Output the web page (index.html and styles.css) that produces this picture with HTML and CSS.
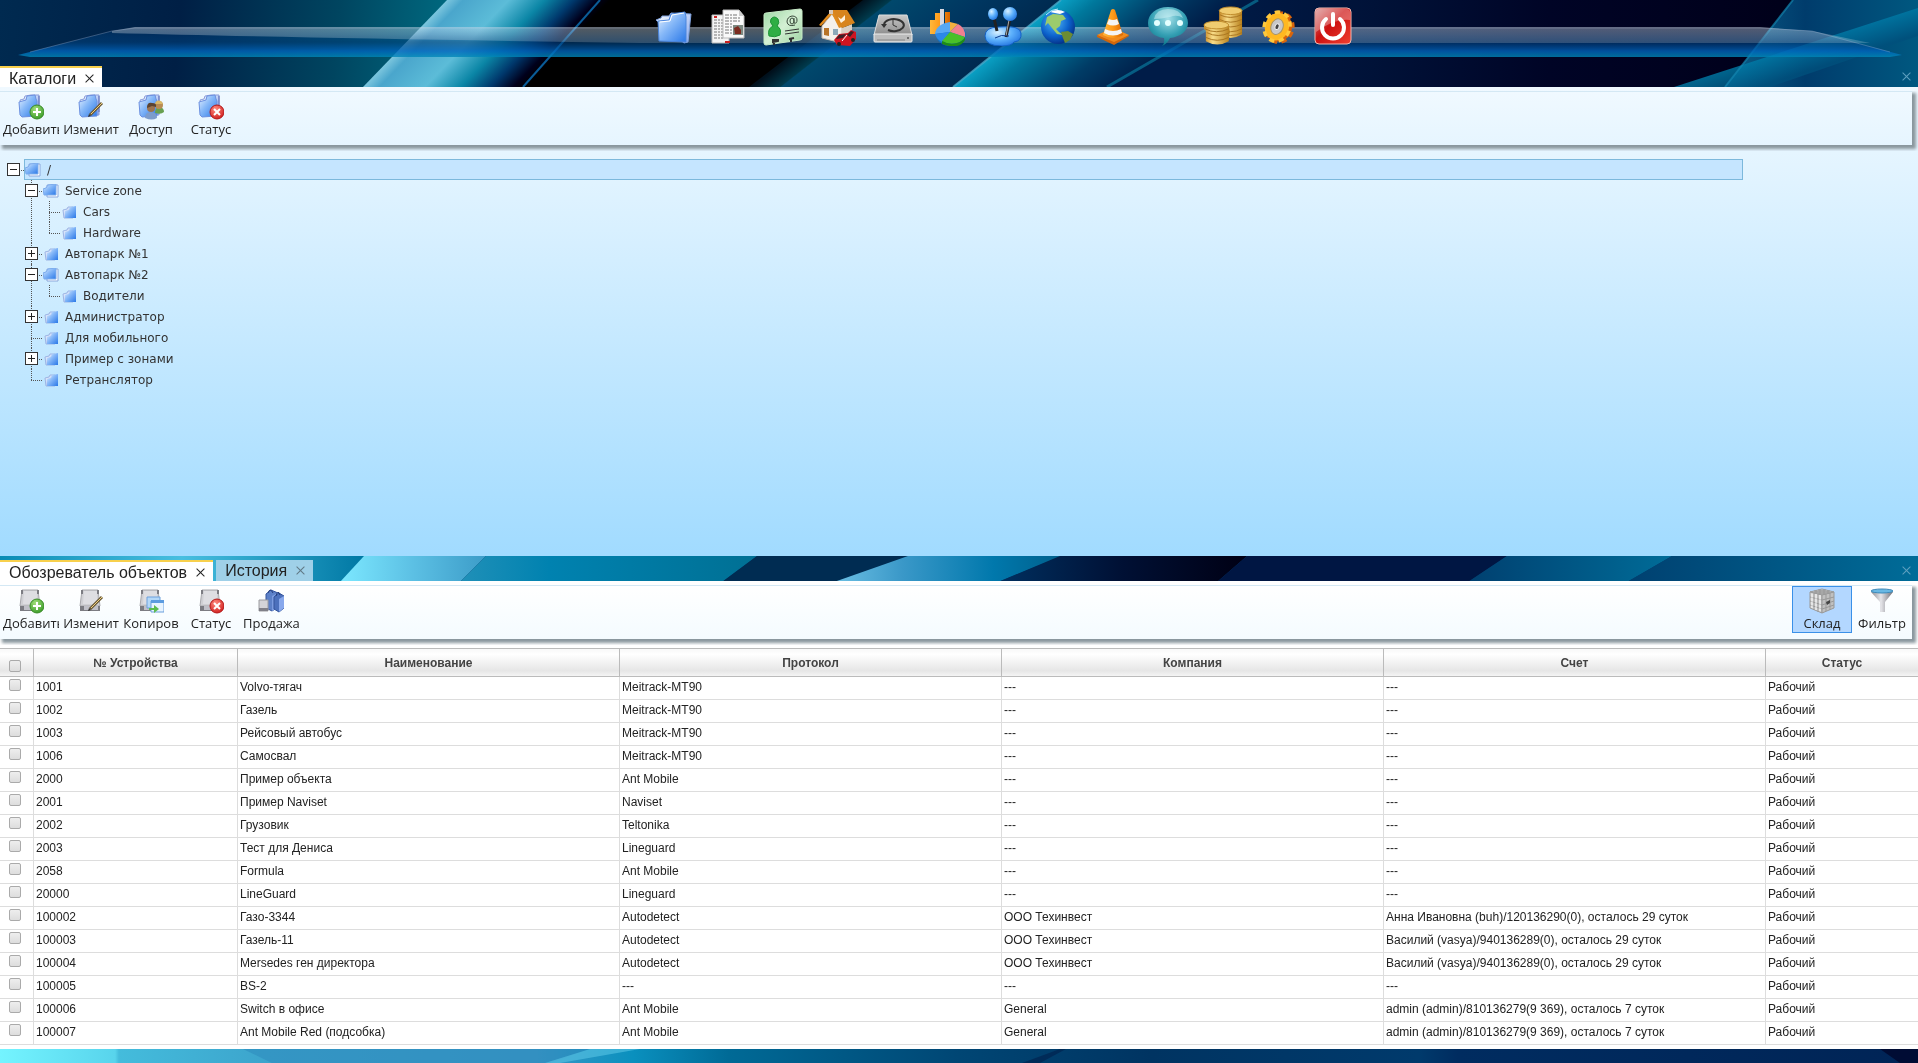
FILE: index.html
```html
<!DOCTYPE html>
<html lang="ru">
    <head>
        <meta charset="UTF-8">
        <title>Каталоги</title>
        <link rel="stylesheet" href="styles.css">
    </head>
    <body>
        <!-- фон рабочего стола -->
        <svg class="wallpaper" viewBox="0 0 1918 1063" preserveAspectRatio="none" aria-hidden="true">
            <defs>
                <linearGradient id="w1" gradientUnits="userSpaceOnUse" x1="0" y1="0" x2="450" y2="40">
                    <stop offset="0" stop-color="#002a50"/><stop offset=".4" stop-color="#001f45"/><stop offset=".75" stop-color="#004560"/><stop offset="1" stop-color="#006a80"/>
                </linearGradient>
                <linearGradient id="w2" gradientUnits="userSpaceOnUse" x1="447" y1="0" x2="610" y2="0" gradientTransform="skewX(-44)">
                    <stop offset="0" stop-color="#7cc6de"/><stop offset=".1" stop-color="#4aa6cc"/><stop offset=".38" stop-color="#5cbcd8"/><stop offset=".6" stop-color="#0b86a6"/><stop offset=".78" stop-color="#00386c"/><stop offset=".92" stop-color="#00001c"/><stop offset="1" stop-color="#000"/>
                </linearGradient>
                <linearGradient id="w3" gradientUnits="userSpaceOnUse" x1="863" y1="0" x2="1061" y2="0" gradientTransform="skewX(-52)">
                    <stop offset="0" stop-color="#00101c"/><stop offset=".14" stop-color="#003a4c"/><stop offset=".15" stop-color="#00486c"/><stop offset=".6" stop-color="#003660"/><stop offset="1" stop-color="#002a50"/>
                </linearGradient>
                <linearGradient id="w4" gradientUnits="userSpaceOnUse" x1="1061" y1="0" x2="1240" y2="0" gradientTransform="skewX(-51)">
                    <stop offset="0" stop-color="#0aa0c4"/><stop offset=".2" stop-color="#00789c"/><stop offset=".6" stop-color="#003c66"/><stop offset="1" stop-color="#001a45"/>
                </linearGradient>
                <linearGradient id="w5" gradientUnits="userSpaceOnUse" x1="1200" y1="0" x2="1780" y2="0">
                    <stop offset="0" stop-color="#001c48"/><stop offset=".3" stop-color="#001238"/><stop offset=".6" stop-color="#000426"/><stop offset="1" stop-color="#00001a"/>
                </linearGradient>
                <linearGradient id="w6" gradientUnits="userSpaceOnUse" x1="1730" y1="0" x2="1918" y2="0">
                    <stop offset="0" stop-color="#0a5c86"/><stop offset=".4" stop-color="#003c6c"/><stop offset="1" stop-color="#005880"/>
                </linearGradient>
                <linearGradient id="w7" gradientUnits="userSpaceOnUse" x1="1780" y1="40" x2="1792" y2="76">
                    <stop offset="0" stop-color="#0090bc"/><stop offset="1" stop-color="#00507c"/>
                </linearGradient>
                <linearGradient id="m1" x1="0" x2="1"><stop offset="0" stop-color="#0a8cb4"/><stop offset=".5" stop-color="#48bfe0"/><stop offset="1" stop-color="#0078a4"/></linearGradient>
                <linearGradient id="m2" x1="0" x2="1"><stop offset="0" stop-color="#7ce8ff"/><stop offset=".5" stop-color="#5cc0e4"/><stop offset="1" stop-color="#3c9cc8"/></linearGradient>
                <linearGradient id="m3" x1="0" x2="1"><stop offset="0" stop-color="#2090b8"/><stop offset=".3" stop-color="#0082b0"/><stop offset="1" stop-color="#007094"/></linearGradient>
                <linearGradient id="m4" x1="0" x2="1"><stop offset="0" stop-color="#6cc0e4"/><stop offset=".3" stop-color="#3a98c8"/><stop offset=".7" stop-color="#0078ac"/><stop offset="1" stop-color="#00608c"/></linearGradient>
                <linearGradient id="m5" x1="0" x2="1"><stop offset="0" stop-color="#003060"/><stop offset=".5" stop-color="#001034"/><stop offset="1" stop-color="#000014"/></linearGradient>
                <linearGradient id="m6" x1="0" x2="1"><stop offset="0" stop-color="#004070"/><stop offset="1" stop-color="#006c98"/></linearGradient>
                <linearGradient id="b1" gradientUnits="userSpaceOnUse" x1="0" y1="0" x2="1918" y2="0">
                    <stop offset="0" stop-color="#74f4ff"/><stop offset=".06" stop-color="#58d4ec"/><stop offset=".062" stop-color="#44bcdc"/><stop offset=".14" stop-color="#3ca4cc"/><stop offset=".28" stop-color="#3a98c6"/><stop offset=".33" stop-color="#0a90be"/><stop offset=".38" stop-color="#006a96"/><stop offset=".5" stop-color="#004674"/><stop offset=".6" stop-color="#003462"/><stop offset=".74" stop-color="#003a6c"/><stop offset=".76" stop-color="#002c60"/><stop offset="1" stop-color="#002456"/>
                </linearGradient>
            </defs>
            <rect width="1918" height="1063" fill="#003a6c"/>
            <!-- верхняя полоса -->
            <rect width="450" height="87" fill="url(#w1)"/>
            <path d="M447 0H880V87H363Z" fill="url(#w2)"/>
            <path d="M600 0L523 87" stroke="#0a5c98" stroke-width="2"/>
            <path d="M863 0H1070V87H749Z" fill="url(#w3)"/>
            <path d="M1061 0H1270L1120 87H953Z" fill="url(#w4)"/>
            <path d="M1061 0L953 87" stroke="#48a8c8" stroke-width="2" opacity=".8"/>
            <path d="M1258 0H1800L1730 87H1107Z" fill="url(#w5)"/>
            <path d="M1258 0L1107 87" stroke="#0a86a8" stroke-width="3" opacity=".6"/>
            <path d="M1793 0H1918V87H1725Z" fill="url(#w6)"/>
            <path d="M1918 8L1674 87H1770L1918 36Z" fill="url(#w7)" opacity=".8"/>
            <path d="M1793 0L1725 87" stroke="#1486b0" stroke-width="2" opacity=".7"/>
            <!-- средняя полоса -->
            <rect y="556" width="364" height="26" fill="url(#m1)"/>
            <path d="M364 556H486L460 582H340Z" fill="url(#m2)"/>
            <path d="M486 556H757L722 582H460Z" fill="url(#m3)"/>
            <path d="M757 556H910L835 582H722Z" fill="#002c52"/>
            <path d="M908 556H1062L998 582H834Z" fill="url(#m4)"/>
            <path d="M1060 556H1247L1217 582H998Z" fill="url(#m5)"/>
            <path d="M1247 556H1507L1468 582H1217Z" fill="#001643"/>
            <path d="M1507 556H1672L1627 582H1468Z" fill="url(#m6)"/>
            <path d="M1672 556H1918V582H1627Z" fill="url(#m6)"/>
            <!-- нижняя полоса -->
            <rect y="1049" width="1918" height="14" fill="url(#b1)"/>
            <path d="M243 1049L272 1063H550L590 1049Z" fill="#2c88bc" opacity=".5"/>
            <path d="M590 1049H640L560 1063H545Z" fill="#58c4e4" opacity=".6"/>
            <path d="M1060 1049L1022 1063H1040L1066 1049Z" fill="#002450" opacity=".7"/>
            <path d="M1880 1049H1918V1063H1900Z" fill="#000c34"/>
        </svg>

        <!-- набор иконок -->
        <svg class="sprite" aria-hidden="true">
            <defs>
                <linearGradient id="blue" x1="0" y1="0" x2="1" y2="1"><stop offset="0" stop-color="#e8f3ff"/><stop offset=".45" stop-color="#86b8f8"/><stop offset="1" stop-color="#2a78e8"/></linearGradient>
                <linearGradient id="pale" x1="0" y1="0" x2="1" y2="1"><stop offset="0" stop-color="#f6faff"/><stop offset="1" stop-color="#8cabee"/></linearGradient>
                <linearGradient id="metal" x1="0" y1="0" x2="0" y2="1"><stop offset="0" stop-color="#c8c8c8"/><stop offset="1" stop-color="#8c8c8c"/></linearGradient>
                <linearGradient id="silver" x1="0" y1="0" x2="1" y2="0"><stop offset="0" stop-color="#8c8c92"/><stop offset=".45" stop-color="#e6e6ea"/><stop offset="1" stop-color="#707078"/></linearGradient>
                <linearGradient id="gold" x1="0" y1="0" x2="1" y2="0"><stop offset="0" stop-color="#c88a26"/><stop offset=".35" stop-color="#f8dc88"/><stop offset="1" stop-color="#b8801c"/></linearGradient>
                <linearGradient id="orange" x1="0" y1="0" x2="1" y2="0"><stop offset="0" stop-color="#ffb83c"/><stop offset=".5" stop-color="#ff9a18"/><stop offset="1" stop-color="#d86400"/></linearGradient>
                <linearGradient id="card" x1="0" y1="0" x2="1" y2="1"><stop offset="0" stop-color="#9cd8a4"/><stop offset=".5" stop-color="#d4f0d4"/><stop offset="1" stop-color="#9cd4a0"/></linearGradient>
                <linearGradient id="red" x1="0" y1="0" x2="1" y2="1"><stop offset="0" stop-color="#d89090"/><stop offset=".45" stop-color="#cc1010"/><stop offset="1" stop-color="#f04030"/></linearGradient>
                <radialGradient id="ball" cx=".35" cy=".3" r=".8"><stop offset="0" stop-color="#d8f0ff"/><stop offset=".5" stop-color="#5cb0fc"/><stop offset="1" stop-color="#1c6cdc"/></radialGradient>
                <radialGradient id="sea" cx=".4" cy=".35" r=".7"><stop offset="0" stop-color="#50b8f8"/><stop offset=".6" stop-color="#0c62cc"/><stop offset="1" stop-color="#042c80"/></radialGradient>
                <radialGradient id="teal" cx=".5" cy=".3" r=".7"><stop offset="0" stop-color="#a4e0e8"/><stop offset=".6" stop-color="#35a0b4"/><stop offset="1" stop-color="#0c7488"/></radialGradient>
                <radialGradient id="greenball" cx=".4" cy=".3" r=".8"><stop offset="0" stop-color="#a4e07c"/><stop offset="1" stop-color="#2f9420"/></radialGradient>
                <radialGradient id="redball" cx=".4" cy=".3" r=".8"><stop offset="0" stop-color="#ff8c80"/><stop offset="1" stop-color="#cc1414"/></radialGradient>
            </defs>
            <symbol id="i-folder" viewBox="0 0 40 40">
                <path d="M3 14l5-2 1-2h7l2-3 20 1-3 28-4 1z" fill="url(#pale)" stroke="#7ea0dc"/>
                <path d="M5 15l11-1 2-6 14-2 1 5v25l-27-1z" fill="url(#blue)" stroke="#4c86dc"/>
                <path d="M7 16l10-1 2-6 12-2" fill="none" stroke="#fff"/>
            </symbol>
            <symbol id="i-docs" viewBox="0 0 40 40">
                <path d="M4 9h17v28H4z" fill="#f4f4f4" stroke="#bbb"/>
                <path d="M6 14h11M6 17h11M6 20h11M6 23h11M6 26h11M6 29h11M6 32h9" stroke="#777" stroke-dasharray="3 1 2 1"/>
                <path d="M6 11h3M17 36h5" stroke="#c22" stroke-width="2"/>
                <path d="M15 4h16l5 6v22H15z" fill="#fafafa" stroke="#bbb"/>
                <path d="M31 4v6h5z" fill="#ccc"/>
                <path d="M17 9h12M17 12h16M17 15h16M17 18h8M17 21h8M17 24h8M17 27h8" stroke="#777" stroke-dasharray="4 1 2 1"/>
                <path d="M25 19h10v10H25z" fill="#7d8a82"/><path d="M26 22l4-2 3 4v4h-6z" fill="#7c2c20"/>
            </symbol>
            <symbol id="i-card" viewBox="0 0 40 40">
                <path d="M1 9q0-2 2-2l34-4q2 0 2 2v27q0 2-2 2L3 39q-2 0-2-2z" fill="url(#card)" stroke="#c8ecc8"/>
                <path d="M6 30Q4 23 10 20 6 16 8 13q3-4 7 0 2 4-1 7 5 3 3 9-5 3-11 1z" fill="#2fae44" stroke="#1c9436"/>
                <path d="M22 25l14-2M22 28l14-2" stroke="#333"/>
                <ellipse cx="29" cy="15" rx="2" ry="3" fill="none" stroke="#3a4a3c"/>
                <path d="M31 12v5q3 1 3-3 0-4-5-4-5 1-5 6 1 5 8 3" fill="none" stroke="#3a4a3c"/>
                <path d="M10 36l5-1v-1h-5zM11 35v4M26 33l5-1M28 32v4" stroke="#333" stroke-width="2"/>
            </symbol>
            <symbol id="i-house" viewBox="0 0 40 40">
                <path d="M4 20L14 8l10 14v15L4 32z" fill="#f4f0ea" stroke="#c8beb0"/>
                <path d="M24 22l10-4v12l-10 7z" fill="#d8cfc4"/>
                <path d="M6 22h5v8l-5-1z" fill="#b87428"/><path d="M15 23h5v6h-5z" fill="#8ca8b8"/>
                <path d="M1 19L14 4l3 0 7 17-3 1-7-14L3 20z" fill="#e08a1c"/>
                <path d="M14 4l15 0 8 13-13 5z" fill="#d8841c"/><path d="M20 11l3 2 4-4v5l-4 3z" fill="#fff0d8"/><path d="M11 4h4v4h-4z" fill="#d8c8b8"/>
                <path d="M16 34l5-6 9-1 3-3 5 2v7l-6 7-13-1z" fill="#d01420"/>
                <path d="M21 29l7-1-3 4-7 1zM29 29l4-4 3 1-4 5z" fill="#3b2028"/>
                <circle cx="21" cy="38" r="2" fill="#222"/><circle cx="35" cy="34" r="2" fill="#222"/><path d="M24 35l5-6" stroke="#fff"/>
            </symbol>
            <symbol id="i-backup" viewBox="0 0 40 40">
                <path d="M6 9h28l5 20H1z" fill="url(#metal)" stroke="#ddd"/>
                <path d="M1 28h38v7q0 1-1 1H2q-1 0-1-1z" fill="#bcbcbc" stroke="#eee"/>
                <path d="M4 34h28" stroke="#888"/><circle cx="35" cy="32" r="1" fill="#555"/>
                <path d="M11 18a10 6 0 1 1 4 6" fill="none" stroke="#333" stroke-width="2"/>
                <path d="M8 18h6l-3 4z" fill="#333"/><path d="M20 13v6l4 2" fill="none" stroke="#333"/>
            </symbol>
            <symbol id="i-chart" viewBox="0 0 40 40">
                <path d="M2 14h5v14H2zM7 7h5v20H7zM17 6h5v18h-5z" fill="url(#orange)"/><path d="M12 3h4v22h-4z" fill="#d8d8e0"/>
                <ellipse cx="23" cy="29" rx="15" ry="11" fill="#1470c0"/>
                <path d="M22 26V16Q8 18 7 28z" fill="#58a8f4"/>
                <path d="M22 26L7 28q2 6 7 8z" fill="#2c88e8"/><path d="M22 26V16l8 2z" fill="#f0b040"/>
                <path d="M22 26l8-8q8 4 7 13z" fill="#f08090"/>
                <path d="M22 26l15 5q-3 5-8 6-9 2-15-2z" fill="#48c028"/><path d="M14 35q7 4 15 2 6-2 8-6v3q-3 5-8 6-8 1-15-2z" fill="#1f8c14"/>
            </symbol>
            <symbol id="i-joystick" viewBox="0 0 40 40">
                <path d="M2 30q0-9 14-9 21-2 22 6 1 8-7 9-3 4-12 4-17 0-17-10z" fill="url(#ball)" stroke="#1460c4"/>
                <path d="M11 12l3 13M27 13l-4 18" stroke="#222" stroke-width="3"/><path d="M26 14l-3 16" stroke="#aaa"/>
                <path d="M12 32q6-4 14-2" fill="none" stroke="#0c3c90"/>
                <ellipse cx="10" cy="8" rx="5" ry="6" fill="url(#ball)"/><circle cx="27" cy="8" r="7" fill="url(#ball)"/>
            </symbol>
            <symbol id="i-globe" viewBox="0 0 40 40">
                <circle cx="20" cy="21" r="17" fill="url(#sea)"/>
                <path d="M12 6q8-4 15 0l-5 2-5-1z" fill="#fff"/>
                <path d="M9 11l6-3 10 1 3 4-5 2-1 5-4 3 3 3 4 3-6-1-5-6-4-5-3 3z" fill="#9ccc6c"/>
                <path d="M23 26l7-1 5 3-3 6-5 3-2-5z" fill="#6c8c34"/><path d="M8 9q5-6 12-6" stroke="#bcecff" fill="none"/>
            </symbol>
            <symbol id="i-cone" viewBox="0 0 40 40">
                <path d="M4 29l9-4h14l9 4-15 9z" fill="#f08a1c"/><path d="M4 29l17 7 15-7v1l-15 9-17-8z" fill="#d0660c"/>
                <path d="M18 4q2-2 4 0l8 25q-9 6-20 0z" fill="url(#orange)"/>
                <path d="M16 13q4 2 8 0l2 5q-6 3-12 0zM12 23q8 4 16 0l1 4q-9 5-18 0z" fill="#f4f4f4"/>
            </symbol>
            <symbol id="i-chat" viewBox="0 0 40 40">
                <path d="M20 1c12 0 20 7 20 16 0 8-8 14-18 15q-3 6-8 8 3-3 2-8C6 31 0 25 0 17 0 8 8 1 20 1z" fill="url(#teal)"/>
                <path d="M6 13Q8 3 20 3q12 0 15 9-6-4-13-1-9 2-16 2z" fill="#d4f4f8" opacity=".5"/>
                <circle cx="9" cy="17" r="3" fill="#e4ffff"/><circle cx="20" cy="17" r="3" fill="#e4ffff"/><circle cx="32" cy="17" r="3" fill="#e4ffff"/>
            </symbol>
            <symbol id="i-coins" viewBox="0 0 40 42">
                <path d="M16 5q12-7 24 0v25q-12 7-24 0z" fill="url(#gold)"/><ellipse cx="28" cy="5" rx="12" ry="4" fill="#f0cc70" stroke="#c08c2c"/>
                <path d="M16 9q12 6 24 0M16 14q12 6 24 0M16 19q12 6 24 0M16 24q12 6 24 0M16 28q12 6 24 0" fill="none" stroke="#a87420"/>
                <path d="M0 20q13-8 26 0l1 6-1 11q-12 7-24 0V26l-2-2z" fill="url(#gold)"/><ellipse cx="13" cy="20" rx="13" ry="4" fill="#f0cc70" stroke="#c08c2c"/>
                <path d="M1 24q12 6 25 0M3 28q12 6 24 0M2 33q12 6 24 0" fill="none" stroke="#a87420"/>
            </symbol>
            <symbol id="i-gear" viewBox="0 0 40 40">
                <g transform="rotate(20 20 21)">
                    <ellipse cx="22" cy="21" rx="12" ry="14" fill="#d8640c" stroke="#d8640c" stroke-width="5" stroke-dasharray="5 4"/>
                    <ellipse cx="19" cy="21" rx="12" ry="14" fill="#ffb820" stroke="#ffc83c" stroke-width="5" stroke-dasharray="5 4"/>
                    <ellipse cx="19" cy="21" rx="11" ry="13" fill="#ffb820"/>
                    <ellipse cx="19" cy="21" rx="6" ry="8" fill="#c8c8c8" stroke="#a89468"/>
                    <ellipse cx="19" cy="21" rx="2" ry="3" fill="#444" stroke="#eee"/>
                </g>
            </symbol>
            <symbol id="i-power" viewBox="0 0 40 40">
                <rect x="2" y="2" width="36" height="36" rx="4" fill="url(#red)" stroke="#f0b8b0"/>
                <path d="M3 5q1-2 3-2h28q3 0 3 3v8Q22 12 3 26z" fill="#fff" opacity=".3"/>
                <path d="M13 13a11 11 0 1 0 14 0" fill="none" stroke="#fff" stroke-width="4" stroke-linecap="round"/>
                <path d="M20 8v11" stroke="#fff" stroke-width="4" stroke-linecap="round"/>
            </symbol>

            <symbol id="i-catalog" viewBox="0 0 26 26">
                <path d="M2 6l4-1 1-3 6-1h8v20H6z" fill="url(#pale)" stroke="#8c9cd8"/>
                <path d="M1 8l7-2 1-4 8-1 1 4 1 2v15l-15 1-2-2z" fill="url(#blue)" stroke="#6c90e0"/>
                <path d="M21 2v16" stroke="#5c6cb8"/>
            </symbol>
            <symbol id="i-device" viewBox="0 0 26 26">
                <path d="M4 2h16l2 16H2z" fill="#d0d0d4" stroke="#a8a8ac"/><path d="M6 3h13v13H5z" fill="#dedee2"/>
                <path d="M3 2h2v4H3zM19 2h2v4h-2zM2 18h20v5H2z" fill="#7c7c82"/><path d="M6 18h14v4H6z" fill="#c0c0c8"/>
            </symbol>
            <symbol id="b-add" viewBox="0 0 26 26">
                <circle cx="19" cy="18" r="7" fill="url(#greenball)" stroke="#3a8c28"/><path d="M19 14v8M15 18h8" stroke="#fff" stroke-width="2"/>
            </symbol>
            <symbol id="b-del" viewBox="0 0 26 26">
                <circle cx="19" cy="18" r="7" fill="url(#redball)" stroke="#b41818"/><path d="M16 15l6 6M22 15l-6 6" stroke="#fff" stroke-width="2"/>
            </symbol>
            <symbol id="b-edit" viewBox="0 0 26 26">
                <path d="M12 21L24 9" stroke="#6b5a38" stroke-width="3"/><path d="M13 20L24 9" stroke="#f0d080"/><path d="M10 23l1-3 2 2z" fill="#333"/>
            </symbol>
            <symbol id="b-users" viewBox="0 0 26 26">
                <path d="M17 19q0-6 5-6 4 1 4 5-3 3-9 1z" fill="#68a050"/><circle cx="21" cy="11" r="4" fill="#b88c54"/><path d="M17 10q1-5 6-3l2 3-5 0z" fill="#d8b868"/>
                <path d="M7 24q0-6 6-6t6 6q-5 3-12 0z" fill="#7c9ccc"/><circle cx="13" cy="14" r="4" fill="#9c7450"/><path d="M9 14q0-6 5-5 5 0 4 4l-4-1z" fill="#5c4430"/>
            </symbol>
            <symbol id="b-copy" viewBox="0 0 26 26">
                <path d="M9 9h13v11H9z" fill="#b4d8f8" stroke="#6ca0dc"/><path d="M13 13h13v11H13z" fill="#e8f4ff" stroke="#6ca0dc"/><path d="M13 12h13v3H13z" fill="#5c9ce0"/>
                <path d="M11 20h5v-3l5 4-5 4v-3h-5z" fill="#5cbc50"/>
            </symbol>
            <symbol id="i-sale" viewBox="0 0 26 26">
                <path d="M8 6l5-4 7 3v14l-6 4-6-3z" fill="#5c80c8" stroke="#34549c"/><path d="M14 8l6-3v15l-6 3z" fill="#7c9ce0"/>
                <path d="M16 9l5-4 5 3v12l-5 4-5-3z" fill="#4c70bc" stroke="#34549c"/><path d="M21 11l5-3v12l-5 4z" fill="#88a8ec"/>
                <path d="M10 5q2-6 5 0M18 8q2-7 4-1" fill="none" stroke="#243c7c"/><path d="M1 12h9v11H1z" fill="#d4d4d8" stroke="#9c9ca0"/><path d="M1 20h9v3H1z" fill="#808088"/>
            </symbol>
            <symbol id="i-store" viewBox="0 0 26 26">
                <path d="M1 4l12-3 12 3-12 3z" fill="#d8d8d8" stroke="#999"/><path d="M1 4l12 3v18L1 20z" fill="#d8d8d8" stroke="#999"/><path d="M13 7l12-3v16l-12 5z" fill="#c0c0c0" stroke="#999"/>
                <path d="M5 5v17M9 6v18M1 9l12 3 12-3M1 13l12 4 12-4M1 17l12 4 12-4M17 6v17M21 5v17M5 3l12 3M9 2l12 3M9 6l12-3M5 5l12-3" fill="none" stroke="#999"/>
                <path d="M3 6v14M7 6v16M11 7v16" stroke="#f4f4f4"/><path d="M17 14l4-2v3l-3 2z" fill="#444"/>
            </symbol>
            <symbol id="i-filter" viewBox="0 0 26 26">
                <path d="M2 4q11-4 22 0l-8 10v10h-5V14z" fill="url(#silver)"/><ellipse cx="13" cy="3" rx="11" ry="2" fill="#68b8e4" stroke="#3c88b8"/>
            </symbol>
            <symbol id="t-closed" viewBox="0 0 16 14">
                <path d="M2 5l4-1 1-2h5v11H3z" fill="url(#pale)" stroke="#9cb4e4"/><path d="M4 6l4-1 1-3 6-1v12H4z" fill="url(#blue)"/>
            </symbol>
            <symbol id="t-open" viewBox="0 0 16 14">
                <path d="M4 1h11v12H4z" fill="#fff" stroke="#8ca8dc"/><path d="M0 5l3-1 2-3 8-1v11H1z" fill="url(#blue)" stroke="#7cacec"/>
            </symbol>
        </svg>

        <div class="page">
            <nav class="dock">
                <svg class="shelf" viewBox="0 0 1918 66" preserveAspectRatio="none" aria-hidden="true">
                    <defs>
                        <linearGradient id="glow" x1="0" y1="0" x2="0" y2="1"><stop offset="0" stop-color="#00509c" stop-opacity=".1"/><stop offset=".5" stop-color="#00407c" stop-opacity=".6"/><stop offset=".8" stop-color="#0064bc" stop-opacity=".8"/><stop offset="1" stop-color="#0088b8" stop-opacity=".8"/></linearGradient>
                        <linearGradient id="shine" x1="0" y1="0" x2="0" y2="1"><stop offset="0" stop-color="#fff" stop-opacity=".34"/><stop offset="1" stop-color="#fff" stop-opacity=".18"/></linearGradient>
                    </defs>
                    <path d="M18 55L112 31L135 27H1760L1812 31L1902 55L1890 57H30Z" fill="url(#glow)"/>
                    <path d="M112 31L135 27H1760L1812 31L1870 43H640Q300 38 112 33Z" fill="url(#shine)"/>
                    <path d="M30 52L112 31L135 28H1760L1812 31L1890 52" fill="none" stroke="#b8c8e0" stroke-opacity=".3"/>
                </svg>
                <a href="#" aria-label="Каталоги"><svg><use href="#i-folder"/></svg></a>
                <a href="#" aria-label="Отчеты"><svg><use href="#i-docs"/></svg></a>
                <a href="#" aria-label="Контакты"><svg><use href="#i-card"/></svg></a>
                <a href="#" aria-label="Объекты"><svg><use href="#i-house"/></svg></a>
                <a href="#" aria-label="Архив"><svg><use href="#i-backup"/></svg></a>
                <a href="#" aria-label="Статистика"><svg><use href="#i-chart"/></svg></a>
                <a href="#" aria-label="Управление"><svg><use href="#i-joystick"/></svg></a>
                <a href="#" aria-label="Карта"><svg><use href="#i-globe"/></svg></a>
                <a href="#" aria-label="Зоны"><svg><use href="#i-cone"/></svg></a>
                <a href="#" aria-label="Сообщения"><svg><use href="#i-chat"/></svg></a>
                <a href="#" aria-label="Счета"><svg><use href="#i-coins"/></svg></a>
                <a href="#" aria-label="Настройки"><svg><use href="#i-gear"/></svg></a>
                <a href="#" aria-label="Выход"><svg><use href="#i-power"/></svg></a>
            </nav>

            <div class="tabs">
                <div class="tab selected">Каталоги <button class="close" aria-label="Закрыть"></button></div>
                <button class="close close-all" aria-label="Закрыть панель"></button>
            </div>
            <section class="panel catalogs">
                <div class="toolbar">
                    <button class="tool"><svg><use href="#i-catalog"/><use href="#b-add"/></svg><span>Добавить</span></button>
                    <button class="tool"><svg><use href="#i-catalog"/><use href="#b-edit"/></svg><span>Изменит</span></button>
                    <button class="tool"><svg><use href="#i-catalog"/><use href="#b-users"/></svg><span>Доступ</span></button>
                    <button class="tool"><svg><use href="#i-catalog"/><use href="#b-del"/></svg><span>Статус</span></button>
                </div>
                <ul class="tree">
                    <li>
                        <div class="row"><button class="toggle" aria-label="Свернуть"></button><div class="node selected"><svg><use href="#t-open"/></svg>/</div></div>
                        <ul>
                            <li>
                                <div class="row"><button class="toggle" aria-label="Свернуть"></button><div class="node"><svg><use href="#t-open"/></svg>Service zone</div></div>
                                <ul>
                                    <li><div class="row leaf"><div class="node"><svg><use href="#t-closed"/></svg>Cars</div></div></li>
                                    <li><div class="row leaf"><div class="node"><svg><use href="#t-closed"/></svg>Hardware</div></div></li>
                                </ul>
                            </li>
                            <li><div class="row"><button class="toggle plus" aria-label="Развернуть"></button><div class="node"><svg><use href="#t-closed"/></svg>Автопарк №1</div></div></li>
                            <li>
                                <div class="row"><button class="toggle" aria-label="Свернуть"></button><div class="node"><svg><use href="#t-open"/></svg>Автопарк №2</div></div>
                                <ul>
                                    <li><div class="row leaf"><div class="node"><svg><use href="#t-closed"/></svg>Водители</div></div></li>
                                </ul>
                            </li>
                            <li><div class="row"><button class="toggle plus" aria-label="Развернуть"></button><div class="node"><svg><use href="#t-closed"/></svg>Администратор</div></div></li>
                            <li><div class="row leaf"><div class="node"><svg><use href="#t-closed"/></svg>Для мобильного</div></div></li>
                            <li><div class="row"><button class="toggle plus" aria-label="Развернуть"></button><div class="node"><svg><use href="#t-closed"/></svg>Пример с зонами</div></div></li>
                            <li><div class="row leaf"><div class="node"><svg><use href="#t-closed"/></svg>Ретранслятор</div></div></li>
                        </ul>
                    </li>
                </ul>
            </section>

            <div class="tabs lower">
                <div class="tab selected">Обозреватель объектов <button class="close" aria-label="Закрыть"></button></div>
                <div class="tab">История <button class="close" aria-label="Закрыть"></button></div>
                <button class="close close-all" aria-label="Закрыть панель"></button>
            </div>
            <section class="panel objects">
                <div class="toolbar">
                    <button class="tool"><svg><use href="#i-device"/><use href="#b-add"/></svg><span>Добавить</span></button>
                    <button class="tool"><svg><use href="#i-device"/><use href="#b-edit"/></svg><span>Изменит</span></button>
                    <button class="tool"><svg><use href="#i-device"/><use href="#b-copy"/></svg><span>Копиров</span></button>
                    <button class="tool"><svg><use href="#i-device"/><use href="#b-del"/></svg><span>Статус</span></button>
                    <button class="tool"><svg><use href="#i-sale"/></svg><span>Продажа</span></button>
                    <button class="tool right pressed"><svg><use href="#i-store"/></svg><span>Склад</span></button>
                    <button class="tool"><svg><use href="#i-filter"/></svg><span>Фильтр</span></button>
                </div>
                <table class="grid">
                    <colgroup><col class="c-check"><col class="c-num"><col><col><col><col><col class="c-status"></colgroup>
                    <thead>
                        <tr><th><input type="checkbox" aria-label="Выбрать все"></th><th>№ Устройства</th><th>Наименование</th><th>Протокол</th><th>Компания</th><th>Счет</th><th>Статус</th></tr>
                    </thead>
                    <tbody>
                        <tr><td><input type="checkbox" aria-label="1001"></td><td>1001</td><td>Volvo-тягач</td><td>Meitrack-MT90</td><td>---</td><td>---</td><td>Рабочий</td></tr>
                        <tr><td><input type="checkbox" aria-label="1002"></td><td>1002</td><td>Газель</td><td>Meitrack-MT90</td><td>---</td><td>---</td><td>Рабочий</td></tr>
                        <tr><td><input type="checkbox" aria-label="1003"></td><td>1003</td><td>Рейсовый автобус</td><td>Meitrack-MT90</td><td>---</td><td>---</td><td>Рабочий</td></tr>
                        <tr><td><input type="checkbox" aria-label="1006"></td><td>1006</td><td>Самосвал</td><td>Meitrack-MT90</td><td>---</td><td>---</td><td>Рабочий</td></tr>
                        <tr><td><input type="checkbox" aria-label="2000"></td><td>2000</td><td>Пример объекта</td><td>Ant Mobile</td><td>---</td><td>---</td><td>Рабочий</td></tr>
                        <tr><td><input type="checkbox" aria-label="2001"></td><td>2001</td><td>Пример Naviset</td><td>Naviset</td><td>---</td><td>---</td><td>Рабочий</td></tr>
                        <tr><td><input type="checkbox" aria-label="2002"></td><td>2002</td><td>Грузовик</td><td>Teltonika</td><td>---</td><td>---</td><td>Рабочий</td></tr>
                        <tr><td><input type="checkbox" aria-label="2003"></td><td>2003</td><td>Тест для Дениса</td><td>Lineguard</td><td>---</td><td>---</td><td>Рабочий</td></tr>
                        <tr><td><input type="checkbox" aria-label="2058"></td><td>2058</td><td>Formula</td><td>Ant Mobile</td><td>---</td><td>---</td><td>Рабочий</td></tr>
                        <tr><td><input type="checkbox" aria-label="20000"></td><td>20000</td><td>LineGuard</td><td>Lineguard</td><td>---</td><td>---</td><td>Рабочий</td></tr>
                        <tr><td><input type="checkbox" aria-label="100002"></td><td>100002</td><td>Газо-3344</td><td>Autodetect</td><td>ООО Техинвест</td><td>Анна Ивановна (buh)/120136290(0), осталось 29 суток</td><td>Рабочий</td></tr>
                        <tr><td><input type="checkbox" aria-label="100003"></td><td>100003</td><td>Газель-11</td><td>Autodetect</td><td>ООО Техинвест</td><td>Василий (vasya)/940136289(0), осталось 29 суток</td><td>Рабочий</td></tr>
                        <tr><td><input type="checkbox" aria-label="100004"></td><td>100004</td><td>Mersedes ген директора</td><td>Autodetect</td><td>ООО Техинвест</td><td>Василий (vasya)/940136289(0), осталось 29 суток</td><td>Рабочий</td></tr>
                        <tr><td><input type="checkbox" aria-label="100005"></td><td>100005</td><td>BS-2</td><td>---</td><td>---</td><td>---</td><td>Рабочий</td></tr>
                        <tr><td><input type="checkbox" aria-label="100006"></td><td>100006</td><td>Switch в офисе</td><td>Ant Mobile</td><td>General</td><td>admin (admin)/810136279(9 369), осталось 7 суток</td><td>Рабочий</td></tr>
                        <tr><td><input type="checkbox" aria-label="100007"></td><td>100007</td><td>Ant Mobile Red (подсобка)</td><td>Ant Mobile</td><td>General</td><td>admin (admin)/810136279(9 369), осталось 7 суток</td><td>Рабочий</td></tr>
                    </tbody>
                </table>
            </section>
        </div>
    </body>
</html>
```
FILE: styles.css
```css
*{
    margin: 0;
    padding: 0;
    box-sizing: border-box;
}
body{
    font: 12px "Liberation Sans", Arial, sans-serif;
    color: #222;
}
ul{
    list-style: none;
}
button{
    border: 0;
    background: none;
    font: inherit;
    color: inherit;
    cursor: pointer;
}
.wallpaper{
    position: fixed;
    left: 0;
    top: 0;
    width: 100%;
    height: 100%;
    z-index: -1;
}
.sprite{
    position: absolute;
    width: 0;
    height: 0;
}
.page{
    min-height: 100vh;
    padding-bottom: 14px;
    display: flex;
    flex-direction: column;
}

/* верхнее меню */
.dock{
    position: relative;
    display: flex;
    justify-content: center;
    gap: 15px;
    height: 66px;
    padding: 6px 0 0 88px;
}
.dock a{
    position: relative;
}
.dock a svg{
    display: block;
    width: 40px;
    height: 40px;
}
.shelf{
    position: absolute;
    left: 0;
    top: 0;
    width: 100%;
    height: 66px;
}

/* вкладки */
.tabs{
    display: flex;
    align-items: flex-end;
    gap: 3px;
    height: 21px;
}
.tabs.lower{
    height: 25px;
}
.tab{
    display: flex;
    align-items: center;
    height: 21px;
    padding: 0 6px 0 9px;
    font-size: 16px;
    line-height: 21px;
    background: #9fd0e8;
}
.tab.selected{
    padding-top: 1px;
    background: #fff;
    border-top: 2px solid #f8d04c;
}
.close{
    position: relative;
    width: 13px;
    height: 13px;
    margin-left: 7px;
}
.close:before, .close:after{
    content: "";
    position: absolute;
    left: 1px;
    top: 6px;
    width: 11px;
    height: 1px;
    background: #222;
    transform: rotate(45deg);
}
.close:after{
    transform: rotate(-45deg);
}
.tab:not(.selected) .close{
    opacity: .5;
}
.close-all{
    margin: 0 5px 4px auto;
}
.close-all:before, .close-all:after{
    background: #5fa0c0;
}

/* панели */
.panel{
    padding-top: 4px;
}
.catalogs{
    flex: 1;
    background: linear-gradient(#f0f9ff 0%, #cbebff 47%, #a1dbff 100%);
}
.objects{
    padding-bottom: 4px;
    background: #fff;
}
.toolbar{
    display: flex;
    height: 54px;
    margin-right: 6px;
    padding-left: 1px;
    border-top: 1px solid #d4e8f4;
    background: linear-gradient(#f0f9ff, #e6f5ff);
    box-shadow: 3px 3px 3px 1px #8a979e;
    clip-path: inset(0 -6px -6px 0);
}
.objects .toolbar{
    background: linear-gradient(#fff, #f4fbff);
}
.tool{
    display: flex;
    flex-direction: column;
    align-items: center;
    width: 60px;
    height: 47px;
    padding-top: 1px;
    border: 1px solid transparent;
    font: 13px "Open Sans", sans-serif;
}
.tool svg{
    width: 26px;
    height: 26px;
}
.tool span{
    max-width: 56px;
    overflow: hidden;
    white-space: nowrap;
    line-height: 18px;
}
.tool.right{
    margin-left: auto;
}
.tool.pressed{
    background: #b3d7ff;
    border-color: #3a90e8;
}

/* дерево */
.tree{
    margin: 14px 175px 0 0;
    font: 12px "DejaVu Sans", Verdana, sans-serif;
    color: #333;
}
.tree ul{
    padding-left: 18px;
}
.tree li{
    position: relative;
}
.tree ul > li:before{
    content: "";
    position: absolute;
    left: 13px;
    top: 0;
    bottom: 0;
    border-left: 1px dotted #555;
}
.tree ul > li:last-child:before{
    bottom: auto;
    height: 11px;
}
.row{
    position: relative;
    display: flex;
    align-items: center;
    height: 21px;
    padding-left: 7px;
}
.row:before{
    content: "";
    position: absolute;
    left: 13px;
    top: 11px;
    width: 11px;
    border-top: 1px dotted #555;
}
.leaf{
    padding-left: 20px;
}
.node{
    flex: 1;
    display: flex;
    align-items: center;
    gap: 6px;
    height: 21px;
    margin-left: 4px;
    border: 1px solid transparent;
}
.node svg{
    width: 16px;
    height: 14px;
}
.node.selected{
    background: #c5e5ff;
    border-color: #7cb8dc;
}
.toggle{
    position: relative;
    width: 13px;
    height: 13px;
    border: 1px solid #333;
    background: #fff;
}
.toggle:before, .toggle.plus:after{
    content: "";
    position: absolute;
    left: 2px;
    top: 5px;
    width: 7px;
    height: 1px;
    background: #222;
}
.toggle.plus:after{
    transform: rotate(90deg);
}

/* таблица */
.grid{
    width: 100%;
    margin-top: 9px;
    border-collapse: separate;
    border-spacing: 0;
    table-layout: fixed;
    border-top: 1px solid #bbb;
}
.c-check{
    width: 34px;
}
.c-num{
    width: 204px;
}
.c-status{
    width: 152px;
}
.grid th{
    height: 28px;
    padding-top: 1px;
    border-right: 1px solid #bbb;
    border-bottom: 1px solid #bbb;
    background: linear-gradient(#f8f8f8, #fff 20%, #e6e6e6 80%, #f4f4f4);
    color: #444;
}
.grid td{
    height: 23px;
    padding: 0 2px 2px;
    border-right: 1px solid #ddd;
    border-bottom: 1px solid #ddd;
    white-space: nowrap;
    overflow: hidden;
}
.grid th:last-child, .grid td:last-child{
    border-right: 0;
}
.grid td:first-child, .grid th:first-child{
    padding: 2px 0 0 9px;
    text-align: left;
    vertical-align: top;
}
.grid th:first-child{
    padding-top: 11px;
}
.grid input{
    display: block;
    appearance: none;
    width: 12px;
    height: 12px;
    border: 1px solid #aaa;
    border-radius: 2px;
    background: linear-gradient(#eee, #ddd);
}
```
